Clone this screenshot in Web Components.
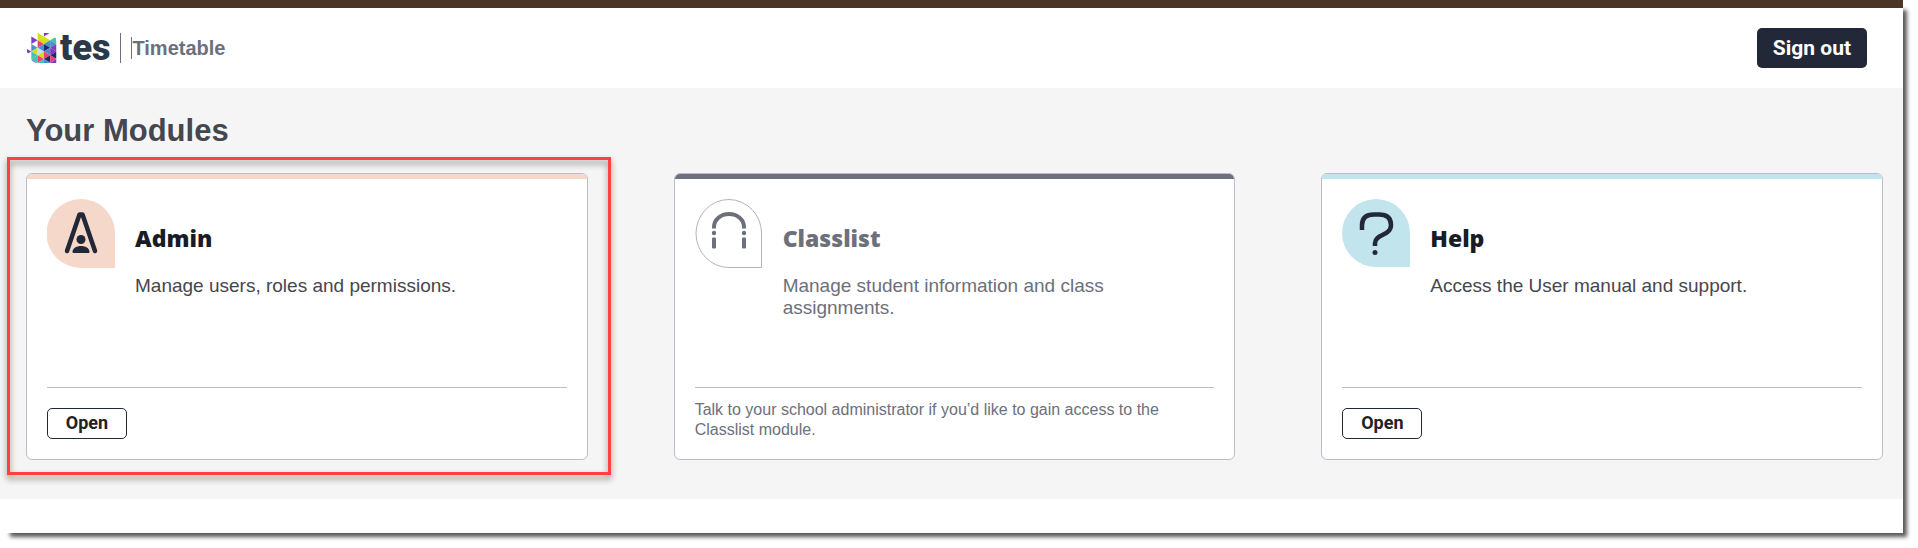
<!DOCTYPE html>
<html lang="en">
<head>
<meta charset="utf-8">
<title>Timetable</title>
<style>
  body { margin: 0; background: #fff; font-family: "Liberation Sans", Arial, sans-serif; color: #46464f; }
</style>
</head>
<body>
<app-sheet>
  <app-header></app-header>
  <module-list heading="Your Modules">
    <module-card highlighted style="--accent:#f6d8cb">
      <svg slot="icon" width="68" height="69" viewBox="0 0 68 69" aria-hidden="true">
        <path d="M34 0a34 34 0 0 1 34 34v35H34A34 34 0 0 1 34 0z" fill="#f6d8cb"/>
        <path d="M20 52 32.500 15.500h3L48 52" fill="none" stroke="#222837" stroke-width="4.500" stroke-linecap="round" stroke-linejoin="round"/>
        <circle cx="34" cy="40.500" r="4.500" fill="#222837"/>
        <path d="M25.500 53c0-8 17-8 17 0 0 1-1 1-1 1h-15s-1 0-1-1z" fill="#222837"/>
      </svg>
      <span slot="title">Admin</span>
      <span slot="text">Manage users, roles and permissions.</span>
      <open-button slot="footer">Open</open-button>
    </module-card>
    <module-card muted style="--accent:#6c707c">
      <svg slot="icon" width="68" height="69" viewBox="0 0 68 69" aria-hidden="true">
        <path d="M34 .5A33 33.500 0 0 1 66.500 34v34.500H34A33 34 0 0 1 34 .5z" fill="#fff" stroke="#b4b4b8"/>
        <path d="M19 29.500V28a15 13 0 0 1 30 0v1.500" fill="none" stroke="#6c707c" stroke-width="4"/>
        <g fill="#6c707c"><circle cx="19" cy="34" r="2.200"/><circle cx="49" cy="34" r="2.200"/>
        <rect x="17" y="38.500" width="4" height="11" rx="1"/><rect x="47" y="38.500" width="4" height="11" rx="1"/></g>
      </svg>
      <span slot="title">Classlist</span>
      <span slot="text">Manage student information and class assignments.</span>
      <span slot="footer">Talk to your school administrator if you’d like to gain access to the Classlist module.</span>
    </module-card>
    <module-card style="--accent:#c2e5ed">
      <svg slot="icon" width="68" height="69" viewBox="0 0 68 69" aria-hidden="true">
        <path d="M34 0a34 34 0 0 1 34 34v34H34A34 34 0 0 1 34 0z" fill="#c2e5ed"/>
        <path d="M20 31v-5q0-10.500 12-10.500h5q12 0 12 10.500c0 11-16 9-16 18v3" fill="none" stroke="#222837" stroke-width="4.500"/>
        <circle cx="33" cy="53.500" r="2.500" fill="#222837"/>
      </svg>
      <span slot="title">Help</span>
      <span slot="text">Access the User manual and support.</span>
      <open-button slot="footer">Open</open-button>
    </module-card>
  </module-list>
</app-sheet>
<script>
const define = (name, html) => {
  const template = document.createElement('template');
  template.innerHTML = html;
  customElements.define(name, class extends HTMLElement {
    constructor() {
      super();
      this.attachShadow({ mode: 'open' }).append(template.content.cloneNode(true));
    }
    connectedCallback() {
      const h = this.shadowRoot.querySelector('[data-heading]');
      if (h) h.textContent = this.getAttribute('heading');
    }
  });
};

define('app-sheet', `
<style>
  :host { display: block; box-sizing: border-box; margin: 0 15px 15px 0; padding-bottom: 34px;
    border-top: 8px solid #4b3527; background: #fff; box-shadow: 7px 7px 4px -3px rgba(0,0,0,.65); }
</style>
<slot></slot>`);

// The logo's mosaic: one string per column of triangles, one letter per colour, dots are gaps.
const mosaicColours = { Y: '#d3e012', P: '#7a3cc0', B: '#4a90c8', K: '#ee3d7c', N: '#1d2f5c', T: '#45c1b0', L: '#bfe3f0' };
const mosaicColumns = ['.....P....', '..P.BYTTBT', '.YYKBLYKTYB', 'P.YBNBKNBKT', '..TBPPNKPBP'];
const mosaic = mosaicColumns.map((column, c) => [...column].map((key, k) => {
  if (key === '.') return '';
  const left = c * 6.3 - 2, right = left + 6.3, y = k * 3.75 - 0.25;
  const [base, tip] = (c + k) % 2 ? [left, right] : [right, left];
  return `<path fill="${mosaicColours[key]}" d="M${base} ${y - 3.75}V${y + 3.75}L${tip} ${y}z"/>`;
}).join('')).join('');

define('tes-logo', `
<style>
  :host { display: flex; align-items: center; gap: 3px; height: 30px; }
  svg { display: block; }
  span { font: 900 36px/30px Roboto, sans-serif; color: #2b3848; }
</style>
<svg width="30" height="30" viewBox="0 0 30 30" aria-hidden="true">
  <clipPath id="a"><path d="M0 3 10 0h10q9 0 9.500 9v21H11Q4 30 3 23L0 19z"/></clipPath>
  <g clip-path="url(#a)">${mosaic}</g>
</svg><span>tes</span>`);

define('app-header', `
<style>
  :host { display: flex; align-items: center; justify-content: space-between; height: 80px; padding: 0 36px 0 27px; }
  .brand { display: flex; align-items: center; gap: 10px; }
  .rule { width: 1px; height: 30px; background: #6c707c; }
  .name { border-left: 1px solid #6c707c; font-size: 20px; line-height: 22px; font-weight: 700; color: #6c707c; }
  button { height: 40px; padding: 0 16px; border: 0; border-radius: 5px; background: #222837; color: #fff;
    font: 700 21px/24px Roboto, sans-serif; }
</style>
<div class="brand"><tes-logo></tes-logo><div class="rule"></div><div class="name">Timetable</div></div>
<button type="button">Sign out</button>`);

define('module-list', `
<style>
  :host { display: block; padding: 25px 20px 39px 26px; background: #f5f5f5; }
  h1 { margin: 0 0 24px; font-size: 31px; line-height: 36px; color: #46464f; }
  .grid { display: grid; grid-template-columns: repeat(3, 1fr); gap: 86px; }
</style>
<h1 data-heading></h1>
<div class="grid"><slot></slot></div>`);

define('module-card', `
<style>
  :host { position: relative; display: flex; flex-direction: column; box-sizing: border-box; min-height: 287px;
    border: 1px solid #bdbccb; border-radius: 6px; background: #fff; }
  :host([highlighted])::after { content: ""; position: absolute; inset: -17px -24px -16px -20px;
    border: 3px solid #ff4040; filter: drop-shadow(0 4px 3px rgba(0,0,0,.45)); pointer-events: none; }
  .band { height: 5px; border-radius: 5px 5px 0 0; background: var(--accent); }
  .main { display: flex; flex: 1; gap: 20px; padding: 20px 20px 0; }
  .copy { flex: 1; padding-top: 22px; }
  h2 { margin: 0; font: 800 23px/34px "Open Sans", sans-serif; color: #171c26; }
  p { margin: 20px 80px 0 0; font-size: 19px; line-height: 22px; }
  footer { box-sizing: border-box; height: 72px; margin: 0 20px; border-top: 1px solid #bdbccb;
    padding-top: 20px; font-size: 16px; line-height: 20px; }
  :host([muted]) footer { padding-top: 12px; }
  :host([muted]) :is(h2, p, footer) { color: #6c707c; }
</style>
<div class="band"></div>
<div class="main"><slot name="icon"></slot>
  <div class="copy"><h2><slot name="title"></slot></h2><p><slot name="text"></slot></p></div></div>
<footer><slot name="footer"></slot></footer>`);

define('open-button', `
<style>
  :host { display: flex; }
  button { width: 80px; height: 31px; padding: 0 0 2px; border: 1px solid #222837; border-radius: 5px; background: #fff;
    color: #222; font: 700 18px/22px Roboto, sans-serif; }
</style>
<button type="button"><slot></slot></button>`);
</script>
</body>
</html>
